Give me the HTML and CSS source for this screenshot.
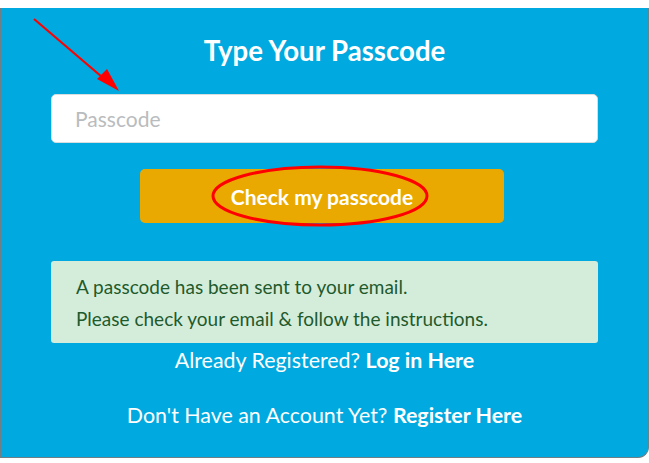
FILE: index.html
```html
<!DOCTYPE html>
<html lang="en">
<head>
<meta charset="utf-8">
<title>Type Your Passcode</title>
<link rel="stylesheet" href="styles.css">
</head>
<body>
<div class="panel">
  <svg class="arrow" width="100" height="90" viewBox="0 0 100 90">
    <line x1="3" y1="1" x2="78" y2="65" stroke="#ff0000" stroke-width="2.2"/>
    <polygon points="66,61 76,51 88,73" fill="#ff0000"/>
  </svg>
  <h1 class="title">Type Your Passcode</h1>
  <input class="field" type="text" placeholder="Passcode">
  <div class="btn-row">
    <button class="btn" type="button">Check my passcode</button>
    <svg class="ring" width="222" height="64" viewBox="0 0 222 64">
      <ellipse cx="111" cy="32" rx="107" ry="29" fill="none" stroke="#ff0000" stroke-width="3"/>
    </svg>
  </div>
  <div class="alert">
    <p>A passcode has been sent to your email.</p>
    <p>Please check your email &amp; follow the instructions.</p>
  </div>
  <p class="link-line">Already Registered? <a href="#">Log in Here</a></p>
  <p class="link-line second">Don't Have an Account Yet? <a href="#">Register Here</a></p>
</div>
</body>
</html>
```
FILE: styles.css
```css
html, body {
  margin: 0;
  padding: 0;
  background: #ffffff;
}
body {
  padding-top: 8px;
  font-family: Lato, "Noto Sans", sans-serif;
}
.panel {
  position: relative;
  box-sizing: border-box;
  width: 649px;
  height: 450px;
  background: #00aae0;
  border-left: 1px solid #6f7f86;
  border-right: 1px solid #6f7f86;
  border-bottom: 1px solid #6f7f86;
  border-bottom-right-radius: 11px;
  padding: 0 50px;
  display: flex;
  flex-direction: column;
  align-items: stretch;
}
.arrow {
  position: absolute;
  left: 30px;
  top: 10px;
}
.title {
  margin: 26px 0 0;
  height: 34px;
  line-height: 34px;
  text-align: center;
  color: #ffffff;
  font-size: 27.6px;
  font-weight: 700;
}
.field {
  margin-top: 26px;
  box-sizing: border-box;
  height: 49px;
  width: 100%;
  border: 1px solid #d8dde0;
  border-radius: 5px;
  background: #ffffff;
  padding: 0 23px;
  font-family: Lato, sans-serif;
  font-size: 21px;
  color: #333;
}
.field::placeholder {
  color: #b9bcbe;
}
.btn-row {
  position: relative;
  margin-top: 26px;
  padding-right: 5px;
  display: flex;
  justify-content: center;
}
.btn {
  width: 364px;
  height: 54px;
  border: 0;
  border-radius: 5px;
  background: #eaa900;
  color: #ffffff;
  font-family: Lato, sans-serif;
  font-size: 21px;
  font-weight: 700;
  padding: 0;
}
.ring {
  position: absolute;
  left: 158px;
  top: -5px;
  pointer-events: none;
}
.alert {
  margin-top: 38px;
  box-sizing: border-box;
  height: 82px;
  background: #d4eddb;
  border-radius: 3px;
  padding: 10px 25px;
  color: #1f5a2c;
  font-size: 19px;
}
.alert p {
  margin: 0;
  line-height: 32px;
}
.link-line {
  margin: 2px 0 0;
  text-align: center;
  color: #ffffff;
  font-size: 21.4px;
  line-height: 30px;
}
.link-line.second {
  margin-top: 25px;
}
.link-line a {
  color: #ffffff;
  font-weight: 700;
  text-decoration: none;
}
```
